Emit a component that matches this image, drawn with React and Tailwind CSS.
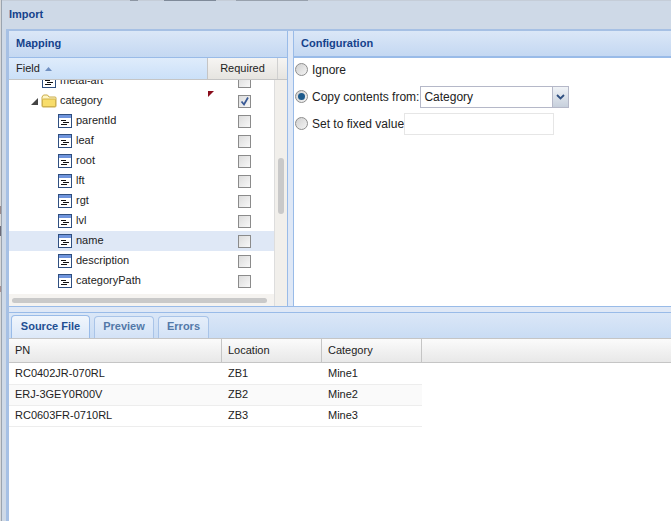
const fields = ['parentId', 'leaf', 'root', 'lft', 'rgt', 'lvl', 'name', 'description', 'categoryPath']

const rows = [
  ['RC0402JR-070RL', 'ZB1', 'Mine1'],
  ['ERJ-3GEY0R00V', 'ZB2', 'Mine2'],
  ['RC0603FR-0710RL', 'ZB3', 'Mine3']
]

function FieldIcon() {
  return (
    <svg width="14" height="14" viewBox="0 0 14 14" className="shrink-0">
      <rect x="0.5" y="0.5" width="13" height="13" fill="#fff" stroke="#2f4f80" />
      <rect x="1" y="1" width="12" height="3" fill="#6f94dc" />
      <path d="M3 6.5h5M5 8.5h6M3 10.5h6" stroke="#111" strokeWidth="1" />
    </svg>
  )
}

function FolderIcon() {
  return (
    <svg width="16" height="14" viewBox="0 0 16 14" className="shrink-0">
      <path d="M1 3 2.500 1h4L8 3h6a1 1 0 0 1 1 1v8a1 1 0 0 1-1 1H2a1 1 0 0 1-1-1z" fill="#fff6c4" stroke="#c9ab4a" />
      <path d="M1.500 6a1 1 0 0 1 1-1h11a1 1 0 0 1 1 1v6.500h-13z" fill="#f8dd6a" stroke="#d0b24e" />
    </svg>
  )
}

function Check({ checked }) {
  return (
    <div className="w-[13px] h-[13px] shrink-0 border border-[#8b8b8b] bg-gradient-to-br from-[#dcdcdc] to-[#f8f8f8] flex items-center justify-center">
      {checked && (
        <svg width="11" height="11" viewBox="0 0 11 11">
          <path d="M2.500 5.500 5 8.500 9 1.500" fill="none" stroke="#3a5a96" strokeWidth="1.800" />
        </svg>
      )}
    </div>
  )
}

function Radio({ checked }) {
  return (
    <div className="w-[13px] h-[13px] shrink-0 rounded-full border border-[#8d8d8d] bg-gradient-to-br from-[#d0d0d0] to-[#f4f4f4] flex items-center justify-center">
      {checked && <div className="w-[7px] h-[7px] rounded-full bg-[#1c5a8c]" />}
    </div>
  )
}

function TreeRow({ label, selected }) {
  return (
    <div className={`h-5 flex items-center pl-[49px] ${selected ? 'bg-[#dfe8f6]' : ''}`}>
      <FieldIcon />
      <span className="ml-1 w-[162px] pb-[2px] text-[#222]">{label}</span>
      <Check />
    </div>
  )
}

export default function App() {
  return (
    <div className="w-[671px] h-[521px] overflow-hidden flex bg-[#ced9e7] font-['Liberation_Sans',sans-serif] text-[11px]">
      {/* page behind the window */}
      <div className="w-[2px] shrink-0 flex flex-col bg-[#d8d8d8] border-r border-[#9aa4b0]">
        <div className="h-[206px]" />
        <div className="h-[8px] bg-[#9a8a8a]" />
        <div className="h-[12px]" />
        <div className="h-[10px] bg-[#6b6b78]" />
        <div className="h-[50px]" />
        <div className="h-[6px] bg-[#a89090]" />
      </div>

      <div className="flex-1 min-w-0 flex flex-col">
        {/* bottoms of the page's text showing above the window */}
        <div className="h-px shrink-0 flex bg-[#c5cdd8]">
          <div className="ml-[128px] w-[8px] bg-[#8d96a3]" />
          <div className="ml-[26px] w-[52px] bg-[#7f8a99]" />
          <div className="ml-[20px] w-[72px] bg-[#98a1ad]" />
        </div>
        <div className="h-[28px] shrink-0 flex items-center pl-[7px] pb-px font-bold text-[#15428b]">
          Import
        </div>

        <div className="ml-[4px] flex-1 min-h-0 flex flex-col bg-[#dfe8f6] border-l-[3px] border-t-[2px] border-[#a6c0e4]">
          <div className="h-[275px] shrink-0 flex">
            {/* Mapping */}
            <div className="w-[279px] shrink-0 flex flex-col border-r border-[#99bbe8]">
              <div className="h-[27px] shrink-0 flex items-center pl-[7px] pb-px font-bold text-[#15428b] bg-gradient-to-b from-[#dbe7f7] to-[#c4d8f2] border-b border-[#99bbe8]">
                Mapping
              </div>
              <div className="h-[22px] shrink-0 flex border-b border-[#c5c5c5]">
                <div className="w-[199px] flex items-center pl-[7px] gap-[5px] text-[#222] bg-gradient-to-b from-[#dfecfb] to-[#cbe0f8] border-r border-[#c5c5c5]">
                  Field
                  <svg width="7" height="4" viewBox="0 0 7 4"><path d="M3.500 0 7 4H0z" fill="#6f8fc0" /></svg>
                </div>
                <div className="w-[70px] flex items-center justify-center text-[#222] bg-gradient-to-b from-[#f6f5f3] to-[#e6e4e0] border-r border-[#d0d0d0]">
                  Required
                </div>
                <div className="flex-1 bg-gradient-to-b from-[#f6f5f3] to-[#e6e4e0]" />
              </div>
              <div className="flex-1 min-h-0 flex bg-white">
                <div className="w-[266px] shrink-0 flex flex-col border-r border-[#dddddd]">
                  <div className="flex-1 min-h-0 overflow-hidden">
                    <div className="-mt-[9px]">
                      <div className="h-5 flex items-center pl-[33px]">
                        <FieldIcon />
                        <span className="ml-1 w-[178px] pb-[2px] text-[#222]">metal-art</span>
                        <Check />
                      </div>
                      <div className="relative h-5 flex items-center pl-[22px]">
                        <svg width="7" height="7" viewBox="0 0 7 7" className="shrink-0"><path d="M7 0v7H0z" fill="#444" /></svg>
                        <span className="ml-[3px]"><FolderIcon /></span>
                        <span className="ml-[3px] w-[178px] pb-[2px] text-[#222]">category</span>
                        <Check checked />
                        <div className="absolute left-[199px] top-0 w-0 h-0 border-t-[6px] border-r-[6px] border-t-[#8a0d1c] border-r-transparent" />
                      </div>
                      {fields.map(field => (
                        <TreeRow key={field} label={field} selected={field === 'name'} />
                      ))}
                    </div>
                  </div>
                  <div className="h-[12px] shrink-0 flex items-center pl-[3px] bg-[#f5f3f0]">
                    <div className="w-[255px] h-[5px] rounded-full bg-[#c9c9c9]" />
                  </div>
                </div>
                <div className="flex-1 bg-[#f1efeb] pt-[78px] pl-[3px]">
                  <div className="w-[6px] h-[56px] rounded-full bg-[#c9c9c9]" />
                </div>
              </div>
            </div>

            {/* Configuration */}
            <div className="ml-[5px] w-[500px] shrink-0 flex flex-col border-l border-[#99bbe8]">
              <div className="h-[27px] shrink-0 flex items-center pl-[7px] font-bold text-[#15428b] bg-gradient-to-b from-[#dbe7f7] to-[#c4d8f2] border-b-2 border-[#99bbe8]">
                Configuration
              </div>
              <div className="flex-1 bg-white pl-px text-[12px] text-[#222]">
                <div className="h-[27px] -mt-[2px] flex items-center gap-1">
                  <Radio />
                  <span>Ignore</span>
                </div>
                <div className="h-[27px] flex items-center gap-1">
                  <Radio checked />
                  <span>Copy contents from:</span>
                  <div className="-ml-[3px] w-[149px] h-[22px] flex border border-[#b5b8c8]">
                    <div className="flex-1 pl-[3px] flex items-center bg-white">Category</div>
                    <div className="w-[16px] flex items-center justify-center bg-gradient-to-b from-[#f0f3f7] to-[#c7d0dc] border-l border-[#b5b8c8]">
                      <svg width="9" height="6" viewBox="0 0 9 6"><path d="M1 1 4.500 4.500 8 1" fill="none" stroke="#2f4f80" strokeWidth="1.800" /></svg>
                    </div>
                  </div>
                </div>
                <div className="h-[27px] flex items-center gap-1">
                  <Radio />
                  <span>Set to fixed value</span>
                  <div className="-ml-[4px] w-[150px] h-[22px] border border-[#e6e6e6] bg-white" />
                </div>
              </div>
            </div>
          </div>

          <div className="h-[6px] shrink-0 border-t border-[#99bbe8]" />

          {/* Tabs */}
          <div className="h-[26px] shrink-0 flex items-end gap-1 pl-[2px] border-t border-[#99bbe8] bg-gradient-to-b from-[#dbe7f7] to-[#c9dcf4] font-bold">
            <div className="w-[79px] h-[23px] flex items-center justify-center pb-[2px] rounded-t-[4px] border border-b-0 border-[#99bbe8] bg-gradient-to-b from-[#f1f6fc] to-[#dce8f8] text-[#1f4f92]">
              Source File
            </div>
            <div className="w-[60px] h-[22px] flex items-center justify-center pb-[2px] rounded-t-[4px] border border-b-0 border-[#a9c4e8] bg-gradient-to-b from-[#e5eefa] to-[#d3e2f6] text-[#5278a8]">
              Preview
            </div>
            <div className="w-[51px] h-[22px] flex items-center justify-center pb-[2px] rounded-t-[4px] border border-b-0 border-[#a9c4e8] bg-gradient-to-b from-[#e5eefa] to-[#d3e2f6] text-[#5278a8]">
              Errors
            </div>
          </div>

          {/* Source file grid */}
          <div className="flex-1 min-h-0 bg-white text-[#222]">
            <div className="h-[25px] flex border-y border-[#c5c5c5] bg-gradient-to-b from-[#fbfbfb] to-[#e8e8e8]">
              <div className="w-[213px] flex items-center pl-[6px] pb-px border-r border-[#c5c5c5]">PN</div>
              <div className="w-[100px] flex items-center pl-[6px] pb-px border-r border-[#c5c5c5]">Location</div>
              <div className="w-[100px] flex items-center pl-[6px] pb-px border-r border-[#c5c5c5]">Category</div>
            </div>
            <div className="w-[413px] mt-px">
              {rows.map((row, i) => (
                <div key={row[0]} className={`h-[21px] flex items-center pb-[2px] border-b border-[#ededed] ${i === 1 ? 'bg-[#fafafa]' : ''}`}>
                  <div className="w-[213px] pl-[6px]">{row[0]}</div>
                  <div className="w-[100px] pl-[6px]">{row[1]}</div>
                  <div className="w-[100px] pl-[6px]">{row[2]}</div>
                </div>
              ))}
            </div>
          </div>
        </div>
      </div>
    </div>
  )
}
